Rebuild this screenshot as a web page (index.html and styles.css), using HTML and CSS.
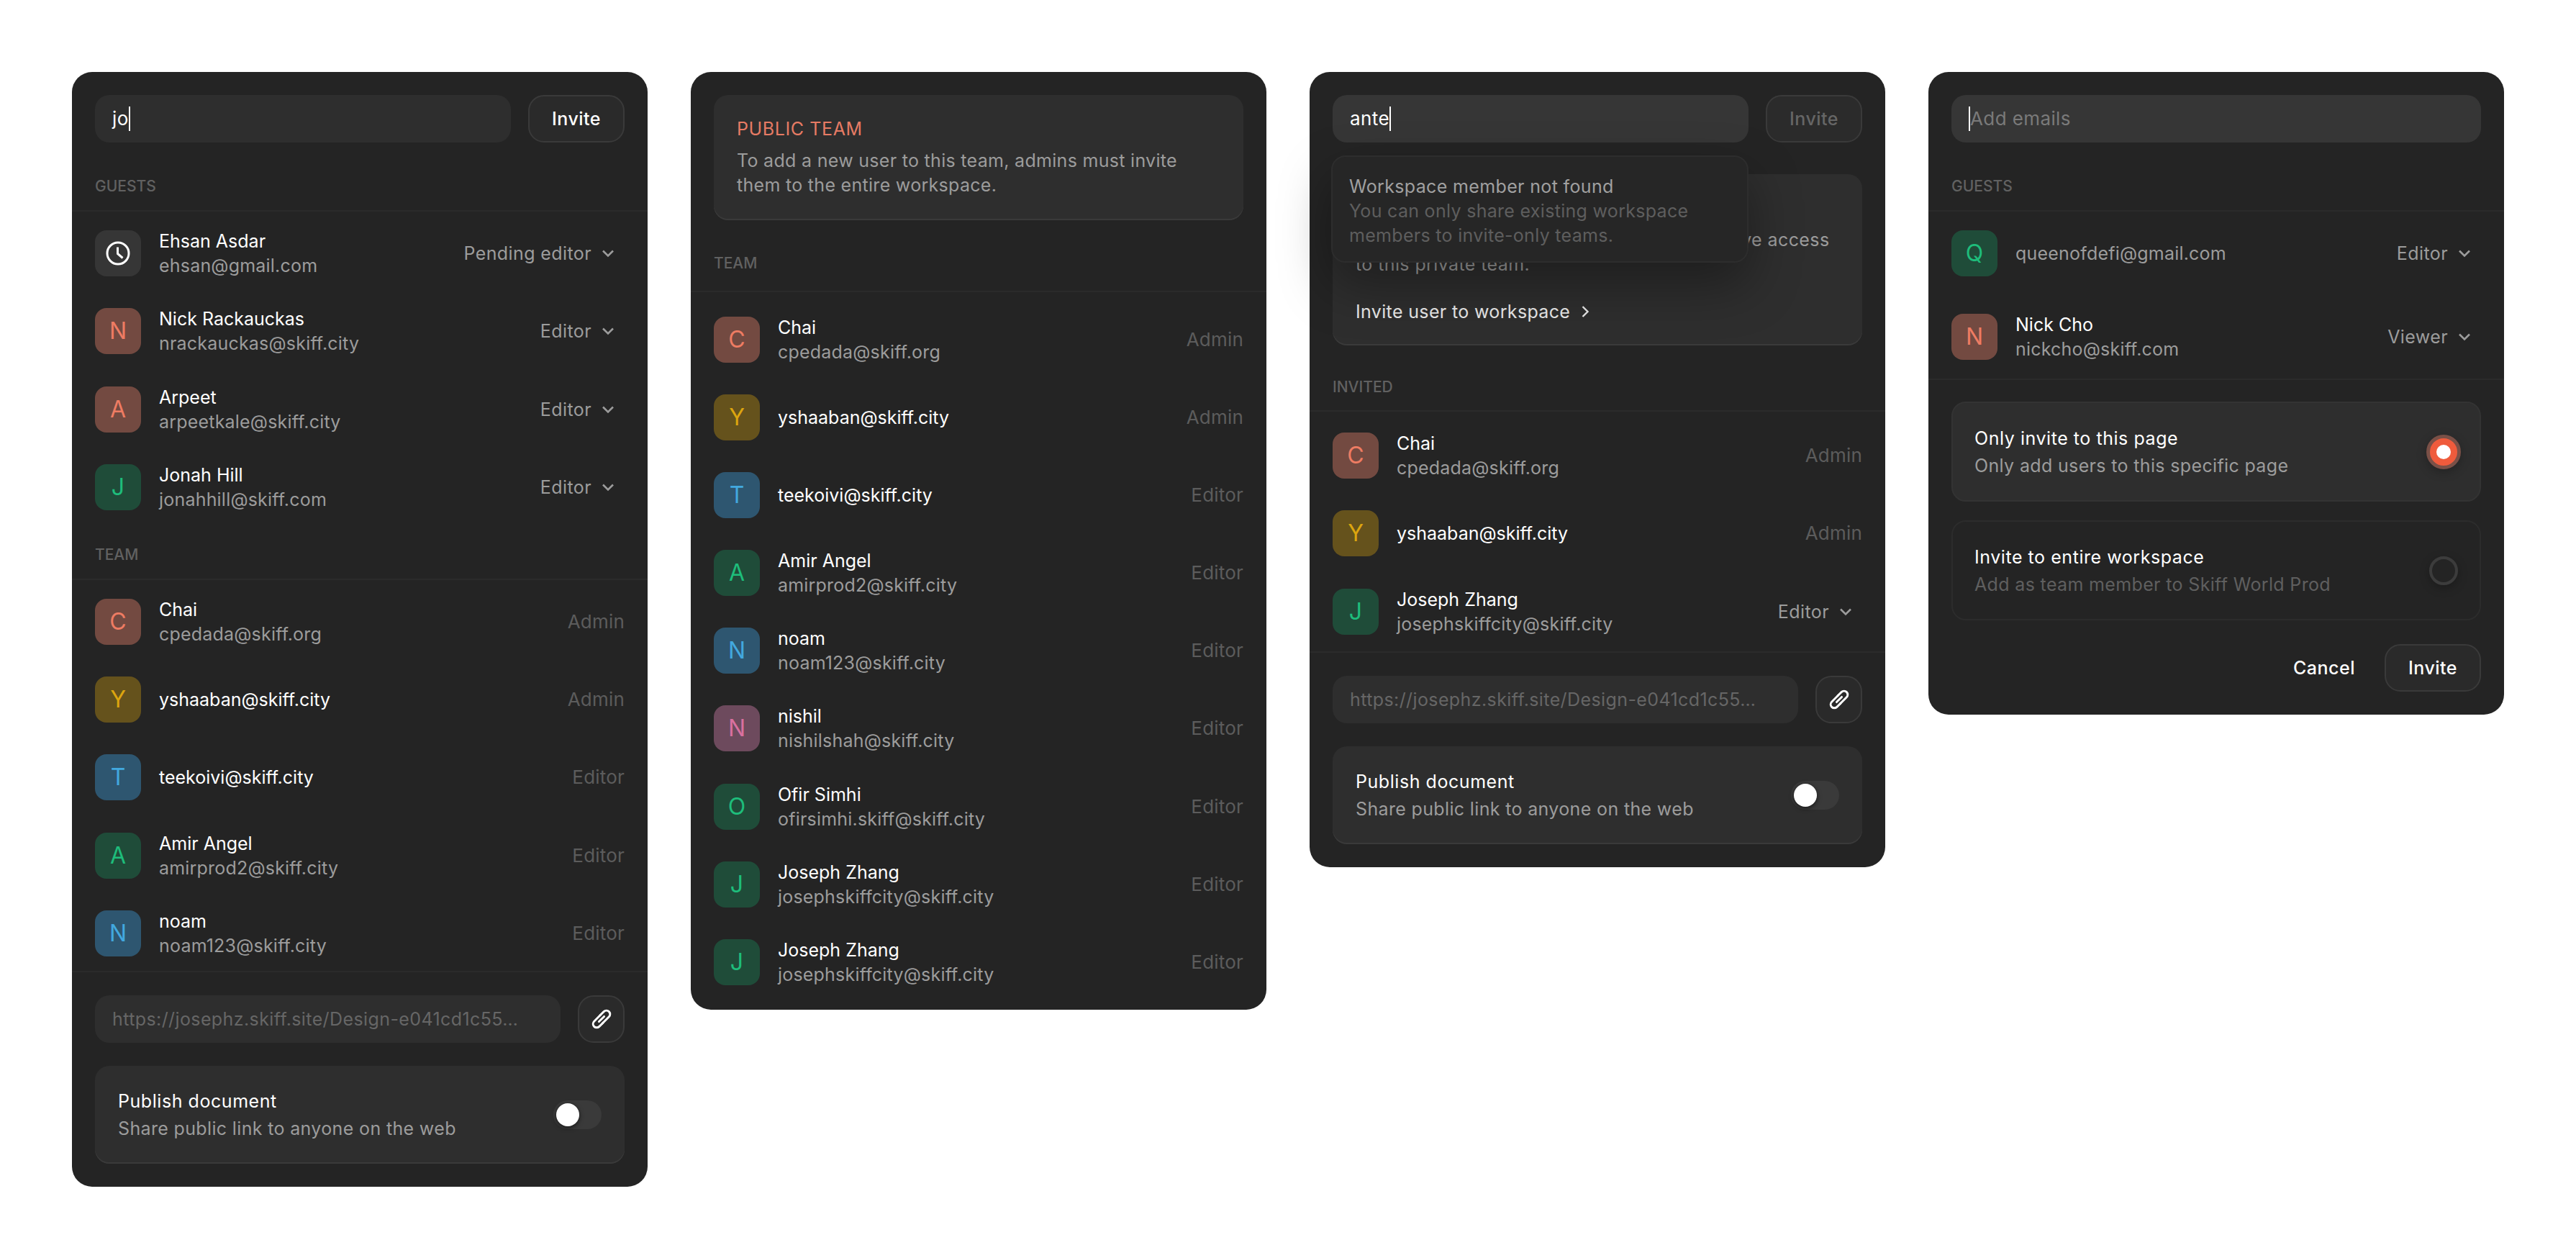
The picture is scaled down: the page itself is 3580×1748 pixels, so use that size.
FILE: index.html
```html
<!doctype html>
<html>
<head>
	<meta charset="utf-8"/>
	<title>Share dialogs</title>
	<link rel="stylesheet" href="styles.css">
</head>
<body>
<svg class="sprite" width="0" height="0">
	<symbol id="chev" viewBox="0 0 18 12"><path d="M2 2.5l7 7 7-7" fill="none" stroke="currentColor" stroke-width="2.6"/></symbol>
	<symbol id="link" viewBox="0 0 32 32"><g transform="rotate(45 16 16)" fill="none" stroke="#fff" stroke-width="2.6" stroke-linecap="round"><path d="M11.5 14V7.5a4.5 4.5 0 0 1 9 0V19"/><path d="M20.5 18v6.5a4.5 4.5 0 0 1-9 0V13"/><path d="M16 11.5v9"/></g></symbol>
</svg>

<div class="board">

	<!-- search with results -->
	<div class="card">
		<div class="top">
			<div class="field"><span class="typed">jo</span><i class="caret"></i></div>
			<div class="btn">Invite</div>
		</div>
		<div class="label">GUESTS</div>
		<div class="rows">
			<div class="row">
				<div class="av av-clock"><svg width="40" height="40" viewBox="0 0 40 40" fill="none" stroke="#fff" stroke-width="3"><circle cx="20" cy="20" r="15"/><path d="M19.5 11.5v9l7 6"/></svg></div>
				<div class="who"><div class="name">Ehsan Asdar</div><div class="mail">ehsan@gmail.com</div></div>
				<div class="role">Pending editor <svg class="chev"><use href="#chev"/></svg></div>
			</div>
			<div class="row">
				<div class="av red">N</div>
				<div class="who"><div class="name">Nick Rackauckas</div><div class="mail">nrackauckas@skiff.city</div></div>
				<div class="role">Editor <svg class="chev"><use href="#chev"/></svg></div>
			</div>
			<div class="row">
				<div class="av red">A</div>
				<div class="who"><div class="name">Arpeet</div><div class="mail">arpeetkale@skiff.city</div></div>
				<div class="role">Editor <svg class="chev"><use href="#chev"/></svg></div>
			</div>
			<div class="row">
				<div class="av green">J</div>
				<div class="who"><div class="name">Jonah Hill</div><div class="mail">jonahhill@skiff.com</div></div>
				<div class="role">Editor <svg class="chev"><use href="#chev"/></svg></div>
			</div>
		</div>
		<div class="label label-team">TEAM</div>
		<div class="rows rows-end">
			<div class="row">
				<div class="av red">C</div>
				<div class="who"><div class="name">Chai</div><div class="mail">cpedada@skiff.org</div></div>
				<div class="role off">Admin</div>
			</div>
			<div class="row">
				<div class="av yellow">Y</div>
				<div class="who"><div class="name">yshaaban@skiff.city</div></div>
				<div class="role off">Admin</div>
			</div>
			<div class="row">
				<div class="av blue">T</div>
				<div class="who"><div class="name">teekoivi@skiff.city</div></div>
				<div class="role off">Editor</div>
			</div>
			<div class="row">
				<div class="av green">A</div>
				<div class="who"><div class="name">Amir Angel</div><div class="mail">amirprod2@skiff.city</div></div>
				<div class="role off">Editor</div>
			</div>
			<div class="row">
				<div class="av blue">N</div>
				<div class="who"><div class="name">noam</div><div class="mail">noam123@skiff.city</div></div>
				<div class="role off">Editor</div>
			</div>
		</div>
		<div class="share">
			<div class="field url">https://josephz.skiff.site/Design-e041cd1c55…</div>
			<div class="btn btn-icon"><svg width="36" height="36"><use href="#link"/></svg></div>
		</div>
		<div class="box publish">
			<div><div class="name">Publish document</div><div class="mail">Share public link to anyone on the web</div></div>
			<div class="toggle"><i></i></div>
		</div>
	</div>

	<!-- public team -->
	<div class="card">
		<div class="box notice">
			<div class="tag">PUBLIC TEAM</div>
			<p>To add a new user to this team, admins must invite<br>them to the entire workspace.</p>
		</div>
		<div class="label label-tall">TEAM</div>
		<div class="rows rows-tall">
			<div class="row">
				<div class="av red">C</div>
				<div class="who"><div class="name">Chai</div><div class="mail">cpedada@skiff.org</div></div>
				<div class="role off">Admin</div>
			</div>
			<div class="row">
				<div class="av yellow">Y</div>
				<div class="who"><div class="name">yshaaban@skiff.city</div></div>
				<div class="role off">Admin</div>
			</div>
			<div class="row">
				<div class="av blue">T</div>
				<div class="who"><div class="name">teekoivi@skiff.city</div></div>
				<div class="role off">Editor</div>
			</div>
			<div class="row">
				<div class="av green">A</div>
				<div class="who"><div class="name">Amir Angel</div><div class="mail">amirprod2@skiff.city</div></div>
				<div class="role off">Editor</div>
			</div>
			<div class="row">
				<div class="av blue">N</div>
				<div class="who"><div class="name">noam</div><div class="mail">noam123@skiff.city</div></div>
				<div class="role off">Editor</div>
			</div>
			<div class="row">
				<div class="av purple">N</div>
				<div class="who"><div class="name">nishil</div><div class="mail">nishilshah@skiff.city</div></div>
				<div class="role off">Editor</div>
			</div>
			<div class="row">
				<div class="av green">O</div>
				<div class="who"><div class="name">Ofir Simhi</div><div class="mail">ofirsimhi.skiff@skiff.city</div></div>
				<div class="role off">Editor</div>
			</div>
			<div class="row">
				<div class="av green">J</div>
				<div class="who"><div class="name">Joseph Zhang</div><div class="mail">josephskiffcity@skiff.city</div></div>
				<div class="role off">Editor</div>
			</div>
			<div class="row">
				<div class="av green">J</div>
				<div class="who"><div class="name">Joseph Zhang</div><div class="mail">josephskiffcity@skiff.city</div></div>
				<div class="role off">Editor</div>
			</div>
		</div>
	</div>

	<!-- member not found -->
	<div class="card">
		<div class="top">
			<div class="field focus"><span class="typed">ante</span><i class="caret"></i></div>
			<div class="btn btn-off">Invite</div>
		</div>
		<div class="popover">
			<div class="pop-title">Workspace member not found</div>
			<div class="pop-text">You can only share existing workspace<br>members to invite-only teams.</div>
		</div>
		<div class="box notice notice-private">
			<div class="tag">PRIVATE TEAM</div>
			<p>Only members you invite to this team will have access<br>to this private team.</p>
			<div class="invite-link">Invite user to workspace <svg class="chev-right" viewBox="0 0 12 18"><path d="M2.5 2l7 7-7 7" fill="none" stroke="#e8e8e8" stroke-width="2.4"/></svg></div>
		</div>
		<div class="label">INVITED</div>
		<div class="rows rows-invited">
			<div class="row">
				<div class="av red">C</div>
				<div class="who"><div class="name">Chai</div><div class="mail">cpedada@skiff.org</div></div>
				<div class="role off">Admin</div>
			</div>
			<div class="row">
				<div class="av yellow">Y</div>
				<div class="who"><div class="name">yshaaban@skiff.city</div></div>
				<div class="role off">Admin</div>
			</div>
			<div class="row">
				<div class="av green">J</div>
				<div class="who"><div class="name">Joseph Zhang</div><div class="mail">josephskiffcity@skiff.city</div></div>
				<div class="role">Editor <svg class="chev"><use href="#chev"/></svg></div>
			</div>
		</div>
		<div class="share">
			<div class="field url">https://josephz.skiff.site/Design-e041cd1c55…</div>
			<div class="btn btn-icon"><svg width="36" height="36"><use href="#link"/></svg></div>
		</div>
		<div class="box publish">
			<div><div class="name">Publish document</div><div class="mail">Share public link to anyone on the web</div></div>
			<div class="toggle"><i></i></div>
		</div>
	</div>

	<!-- invite options -->
	<div class="card">
		<div class="top">
			<div class="field focus"><i class="caret"></i><span class="hint">Add emails</span></div>
		</div>
		<div class="label">GUESTS</div>
		<div class="rows rows-guests">
			<div class="row">
				<div class="av green">Q</div>
				<div class="who"><div class="mail">queenofdefi@gmail.com</div></div>
				<div class="role">Editor <svg class="chev"><use href="#chev"/></svg></div>
			</div>
			<div class="row">
				<div class="av red">N</div>
				<div class="who"><div class="name">Nick Cho</div><div class="mail">nickcho@skiff.com</div></div>
				<div class="role">Viewer <svg class="chev"><use href="#chev"/></svg></div>
			</div>
		</div>
		<div class="options">
			<div class="option option-on">
				<div><div class="name">Only invite to this page</div><div class="mail">Only add users to this specific page</div></div>
				<div class="radio radio-on"><i></i></div>
			</div>
			<div class="option">
				<div><div class="name">Invite to entire workspace</div><div class="mail dim">Add as team member to Skiff World Prod</div></div>
				<div class="radio"></div>
			</div>
		</div>
		<div class="actions">
			<div class="cancel">Cancel</div>
			<div class="btn">Invite</div>
		</div>
	</div>

</div>
</body>
</html>
```

FILE: styles.css
```css
body{
	margin: 0;
	background: #fff;
	font-family: Inter, "Liberation Sans", sans-serif;
	font-size: 25px;
	line-height: 34px;
	color: #fff;
}
.sprite{
	position: absolute;
}
.board{
	display: flex;
	align-items: flex-start;
	gap: 60px;
	padding: 100px;
}
.card{
	position: relative;
	flex: 0 0 800px;
	box-sizing: border-box;
	background: #242424;
	border-radius: 28px;
	padding-bottom: 32px;
}

/* top inputs */
.top{
	display: flex;
	gap: 24px;
	padding: 32px 32px 0;
}
.field{
	flex: 1;
	display: flex;
	align-items: center;
	height: 66px;
	padding: 0 24px;
	background: #2e2e2e;
	border-radius: 20px;
}
.focus{
	background: #363636;
}
.typed{
	font-size: 26px;
	letter-spacing: .4px;
}
.hint{
	color: #7a7a7a;
	font-size: 26px;
	letter-spacing: .4px;
}
.caret{
	display: block;
	width: 2px;
	height: 34px;
	background: #fff;
}
.url{
	color: #666;
	letter-spacing: .4px;
	white-space: nowrap;
	overflow: hidden;
}
.btn{
	box-sizing: border-box;
	display: flex;
	align-items: center;
	justify-content: center;
	width: 134px;
	height: 66px;
	border: 2px solid #3a3a3a;
	border-radius: 22px;
	background: #2a2a2a;
	font-weight: 450;
	letter-spacing: .5px;
}
.btn-off{
	background: #2b2b2b;
	color: #666;
}
.btn-icon{
	width: 65px;
}

/* section labels */
.label{
	margin-top: 48px;
	padding: 0 32px 20px;
	font-size: 21px;
	line-height: 26px;
	font-weight: 500;
	color: #616161;
	border-bottom: 2px solid #2b2b2b;
}
.label-team{
	margin-top: 47px;
}
.label-tall{
	margin-top: 47px;
	padding-bottom: 25px;
}
.notice-private + .label{
	margin-top: 45px;
	padding-bottom: 19px;
}

/* people */
.rows{
	display: flex;
	flex-direction: column;
	gap: 40.25px;
	padding: 24px 32px 0;
}
.rows-end{
	padding-bottom: 18px;
	border-bottom: 2px solid #2b2b2b;
}
.rows-tall{
	padding-top: 32px;
	gap: 40.1px;
}
.rows-invited{
	padding-top: 27px;
	padding-bottom: 21px;
	border-bottom: 2px solid #2b2b2b;
}
.rows-guests{
	padding-bottom: 24px;
	gap: 48px;
	border-bottom: 2px solid #2b2b2b;
}
.row{
	display: flex;
	align-items: center;
	height: 68px;
}
.av{
	flex: 0 0 64px;
	display: flex;
	align-items: center;
	justify-content: center;
	height: 64px;
	border-radius: 16px;
	font-size: 32px;
	line-height: 64px;
}
.av-clock{ background: #363636; }
.red{ background: #734a41; color: #ee7c63; }
.green{ background: #1f4c39; color: #1ebd7b; }
.blue{ background: #2e5670; color: #42a8df; }
.yellow{ background: #65521c; color: #dca50f; }
.purple{ background: #6d4a5d; color: #d9709f; }
.who{
	flex: 1;
	margin-left: 25px;
}
.name{
	color: #fff;
}
.mail{
	color: #9c9c9c;
	letter-spacing: .2px;
}
.dim{
	color: #5f5f5f;
}
.role{
	display: flex;
	align-items: center;
	color: #9c9c9c;
	letter-spacing: .4px;
	padding-right: 14px;
}
.role.off{
	color: #5c5c5c;
	font-size: 26px;
	letter-spacing: .2px;
	padding-right: 0;
}
.chev{
	width: 18px;
	height: 12px;
	margin-left: 14px;
	color: #9c9c9c;
}

/* link + publish */
.share{
	display: flex;
	gap: 24px;
	padding: 32px 32px 0;
}
.box{
	background: #2e2e2e;
	border-radius: 20px;
	box-shadow: inset 0 -2px 0 #3a3a3a;
}
.publish{
	display: flex;
	align-items: center;
	justify-content: space-between;
	height: 136px;
	margin: 32px 32px 0;
	padding: 0 32px;
	box-sizing: border-box;
	line-height: 38px;
}
.publish .name,
.option .name{
	letter-spacing: .55px;
}
.publish .mail,
.option .mail{
	letter-spacing: .35px;
}
.toggle{
	position: relative;
	width: 67px;
	height: 40px;
	border-radius: 20px;
	background: #3a3a3a;
}
.toggle i{
	position: absolute;
	left: 4px;
	top: 4px;
	width: 32px;
	height: 32px;
	border-radius: 50%;
	background: #fff;
	box-shadow: 0 2px 6px rgba(0,0,0,.6);
}

/* notices */
.notice{
	margin: 32px 32px 0;
	padding: 30px 32px 32px;
}
.tag{
	color: #e67b64;
	letter-spacing: .6px;
}
.notice p{
	margin: 10px 0 0;
	color: #9c9c9c;
	letter-spacing: .3px;
	white-space: nowrap;
}
.notice-private{
	margin-top: 44px;
	padding-bottom: 30px;
}
.notice-private p{
	letter-spacing: .4px;
}
.invite-link{
	display: flex;
	align-items: center;
	margin-top: 32px;
	color: #e8e8e8;
	letter-spacing: .35px;
}
.chev-right{
	width: 12px;
	height: 18px;
	margin-left: 15px;
}
.popover{
	position: absolute;
	left: 30px;
	top: 116px;
	box-sizing: border-box;
	width: 580px;
	height: 149px;
	padding: 24px 23px 0;
	background: #262626;
	border: 2px solid #2d2d2d;
	border-radius: 20px;
	box-shadow: 0 30px 70px rgba(0,0,0,.35);
	z-index: 2;
}
.pop-title{
	color: #a0a0a0;
	letter-spacing: .35px;
}
.pop-text{
	color: #5e5e5e;
	letter-spacing: .3px;
}

/* invite options */
.options{
	display: flex;
	flex-direction: column;
	gap: 26px;
	padding: 30px 32px 0;
}
.option{
	display: flex;
	align-items: center;
	justify-content: space-between;
	box-sizing: border-box;
	height: 139px;
	padding: 0 26px 0 30px;
	border: 2px solid #2c2c2c;
	border-radius: 20px;
	line-height: 38px;
}
.option-on{
	background: #2e2e2e;
	border-color: #333;
}
.radio{
	box-sizing: border-box;
	width: 40px;
	height: 40px;
	margin-right: 4px;
	border: 4px solid #3c3c3c;
	border-radius: 50%;
	box-shadow: 0 4px 14px rgba(0,0,0,.25);
}
.radio-on{
	display: flex;
	align-items: center;
	justify-content: center;
	width: 48px;
	height: 48px;
	margin-right: 0;
	border: 5px solid #7a5047;
	background: #ef5b3c;
}
.radio-on i{
	width: 20px;
	height: 20px;
	border-radius: 50%;
	background: #fff;
}
.actions{
	display: flex;
	align-items: center;
	justify-content: flex-end;
	gap: 41px;
	padding: 33px 32px 0;
}
.cancel{
	font-weight: 450;
	letter-spacing: .5px;
}
```
